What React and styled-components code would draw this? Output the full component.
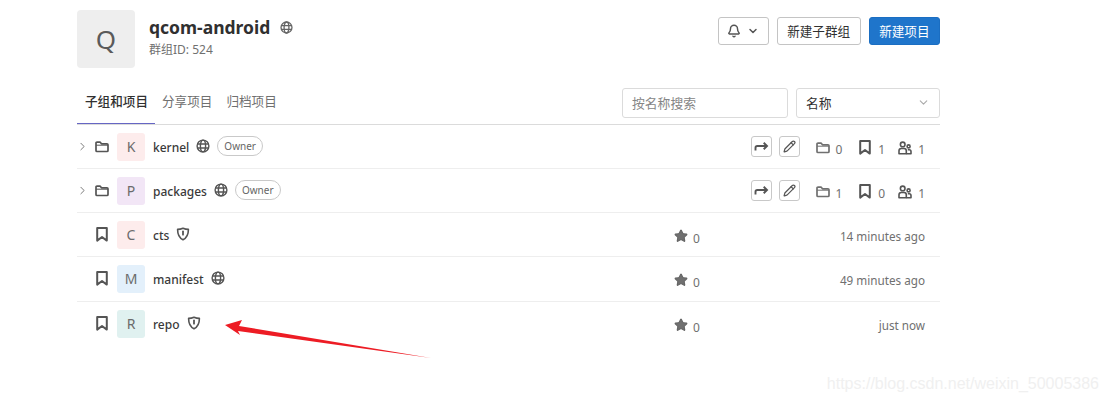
import React from 'react'
import styled, { createGlobalStyle } from 'styled-components'
import { Bell, ChevronDown, ChevronRight, Pencil, Star } from 'lucide-react'

const GlobalStyle = createGlobalStyle`
  html, body { margin: 0; padding: 0; background: #fff; }
  body {
    font-family: "Noto Sans", "Noto Sans CJK SC", sans-serif;
    color: #303030;
    overflow: hidden;
  }
`

const Page = styled.div`
  position: relative;
  width: 1107px;
  height: 401px;
  padding: 10px 167px 0 77px;
  box-sizing: border-box;
`

const GroupHeader = styled.header`
  display: flex;
  align-items: flex-start;
  height: 78px;
`

const GroupAvatar = styled.div`
  width: 58px;
  height: 58px;
  border-radius: 4px;
  background: #eee;
  color: #5a5a5a;
  font-size: 26px;
  display: flex;
  align-items: center;
  justify-content: center;
  margin-right: 14px;
`

const GroupInfo = styled.div`
  flex: 1;
  padding-top: 6px;
`

const GroupTitle = styled.h1`
  margin: 0;
  font-size: 17.5px;
  line-height: 22px;
  font-weight: 700;
  color: #303030;
  display: flex;
  align-items: center;
  gap: 10px;
`

const GroupId = styled.div`
  font-size: 12px;
  line-height: 16px;
  margin-top: 4px;
  color: #707070;
`

const Actions = styled.div`
  display: flex;
  gap: 8px;
  padding-top: 7px;
`

const Button = styled.button`
  height: 28px;
  box-sizing: border-box;
  padding: 0 ${p => (p.$icon ? '0' : '9.5px')} ${p => (p.$icon ? '0' : '2px')};
  width: ${p => (p.$icon ? '51px' : 'auto')};
  border-radius: 3px;
  border: 1px solid ${p => (p.$primary ? '#1b6ec2' : '#c4c4c4')};
  background: ${p => (p.$primary ? '#1f75cb' : '#fff')};
  color: ${p => (p.$primary ? '#fff' : '#303030')};
  font: 400 12.6px "Noto Sans CJK SC", "Noto Sans", sans-serif;
  display: flex;
  align-items: center;
  justify-content: center;
  gap: 6px;
`

const TabsBar = styled.div`
  display: flex;
  align-items: flex-start;
  justify-content: space-between;
  height: 37px;
  box-sizing: border-box;
  border-bottom: 1px solid #dbdbdb;
`

const Tabs = styled.nav`
  display: flex;
`

const Tab = styled.a`
  height: 36px;
  box-sizing: border-box;
  padding: 4px 7px 0 ${p => (p.$active ? '8px' : '7px')};
  width: ${p => (p.$active ? '78px' : 'auto')};
  font: ${p => (p.$active ? 500 : 400)} 12.6px/18px "Noto Sans CJK SC", sans-serif;
  color: ${p => (p.$active ? '#303030' : '#707070')};
  border-bottom: 1px solid ${p => (p.$active ? '#6666c4' : 'transparent')};
`

const Filters = styled.div`
  display: flex;
  gap: 8px;
`

const SearchInput = styled.div`
  width: 166px;
  height: 30px;
  box-sizing: border-box;
  border: 1px solid #dbdbdb;
  border-radius: 3px;
  padding: 0 9px 2px;
  display: flex;
  align-items: center;
  font: 400 12.8px "Noto Sans CJK SC", sans-serif;
  color: #868686;
`

const SortSelect = styled(SearchInput)`
  width: 144px;
  justify-content: space-between;
  color: #303030;
`

const Row = styled.div`
  height: 44.15px;
  box-sizing: border-box;
  border-bottom: ${p => (p.$last ? 'none' : '1px solid #eee')};
  display: flex;
  align-items: center;
  padding: 0 15px 0 0;
`

const Toggle = styled.span`
  width: 18px;
  flex: none;
  display: flex;
  justify-content: center;
  margin-left: -4px;
  margin-right: 4px;
  color: #666;
`

const TypeIcon = styled.span`
  width: 14px;
  flex: none;
  display: flex;
  justify-content: center;
  margin-right: 8px;
  color: #555;
`

const ItemAvatar = styled.div`
  width: 28px;
  height: 28px;
  flex: none;
  border-radius: 3px;
  background: ${p => p.$bg};
  color: #6b6b6b;
  font-size: 14px;
  display: flex;
  align-items: center;
  justify-content: center;
  margin-right: 8px;
`

const ItemName = styled.a`
  font-size: 12px;
  line-height: 16px;
  font-weight: 500;
  color: #3a3a3a;
  margin-top: 2px;
`

const Visibility = styled.span`
  display: flex;
  margin: -2px 0 0 7px;
  color: #555;
`

const TitleVisibility = styled(Visibility)`
  margin: 0;
  color: #666;
`

const OwnerBadge = styled.span`
  height: 20px;
  box-sizing: border-box;
  margin: -1px 0 0 7px;
  padding: 0 6px;
  border: 1px solid #c9c9c9;
  border-radius: 10px;
  font-size: 10px;
  line-height: 18px;
  color: #666;
`

const RowRight = styled.div`
  margin-left: auto;
  display: flex;
  align-items: center;
`

const ProjectMeta = styled(RowRight)`
  width: 251px;
  justify-content: space-between;
  padding-top: 3px;
`

const IconButton = styled.span`
  width: 21px;
  height: 21px;
  box-sizing: border-box;
  margin-right: ${p => p.$gap || 0}px;
  border: 1px solid #c8c8c8;
  border-radius: 3px;
  display: flex;
  align-items: center;
  justify-content: center;
  color: #555;
`

const Stat = styled.span`
  display: flex;
  align-items: center;
  gap: ${p => p.$gap || 5}px;
  margin-left: ${p => p.$left || 0}px;
  margin-top: ${p => (p.$left ? 2 : 0)}px;
  font-size: 12px;
  line-height: 16px;
  color: #707070;
  & > b {
    font-weight: 400;
    padding-top: 5px;
  }
`

const TimeAgo = styled.span`
  font-size: 11.7px;
  color: #707070;
`

const ArrowOverlay = styled.svg`
  position: absolute;
  left: 0;
  top: 0;
  pointer-events: none;
`

const Watermark = styled.div`
  position: absolute;
  right: 8px;
  bottom: 8px;
  font: 400 16px "Liberation Sans", sans-serif;
  color: #f0f0f0;
`

const GlobeIcon = ({ size = 14 }) => (
  <svg width={size} height={size} viewBox="0 0 14 14" fill="none" stroke="currentColor" strokeWidth="1.4">
    <circle cx="7" cy="7" r="5.9" />
    <ellipse cx="7" cy="7" rx="2.6" ry="5.9" />
    <path d="M1.2 5h11.6M1.2 9h11.6" />
  </svg>
)

const ShieldIcon = () => (
  <svg width="14" height="14" viewBox="0 0 14 14" fill="none" stroke="currentColor" strokeWidth="1.6">
    <path d="M7 1.2c2 .9 3.6 1.2 5.4 1.2 0 5-1.6 8.4-5.4 10.3C3.2 10.8 1.6 7.4 1.6 2.4 3.4 2.4 5 2.1 7 1.2z" strokeLinejoin="round" />
    <path d="M7 4.3v3.4" strokeWidth="1.8" strokeLinecap="round" />
  </svg>
)

const FolderIcon = () => (
  <svg width="14" height="12" viewBox="0 0 14 12" fill="none" stroke="currentColor" strokeWidth="1.7">
    <path d="M1 2.2c0-.6.4-1 1-1h3.2l1.3 1.6H12c.6 0 1 .4 1 1v5.7c0 .6-.4 1-1 1H2c-.6 0-1-.4-1-1z" strokeLinejoin="round" />
    <path d="M1 4.2h12" strokeWidth="1" />
  </svg>
)

const BookmarkIcon = () => (
  <svg width="12" height="15" viewBox="0 0 12 15" fill="none" stroke="#555" strokeWidth="2">
    <path d="M1.2 1h9.6v12.6L6 10l-4.8 3.6z" strokeLinejoin="round" />
  </svg>
)

const UsersIcon = () => (
  <svg width="14" height="14" viewBox="0 0 14 14" fill="none" stroke="#555" strokeWidth="1.6">
    <circle cx="4.7" cy="3.4" r="2.3" />
    <path d="M1 12.8V9.8c0-1.3 1-2.3 2.3-2.3h2.8c1.3 0 2.2 1 2.2 2.3v3z" strokeLinejoin="round" />
    <circle cx="10.6" cy="5.4" r="1.5" />
    <path d="M8.3 12.8H13v-2.2c0-1-.8-1.8-1.8-1.8H9.8" strokeLinejoin="round" />
  </svg>
)

const ShareIcon = () => (
  <svg width="15" height="11" viewBox="0 0 15 11" fill="none" stroke="currentColor" strokeWidth="1.9">
    <path d="M1.5 9.5V6.8c0-1 .7-1.8 1.8-1.8h9.2" />
    <path d="M9.7 1.8L13 5 9.7 8.2" />
  </svg>
)

const groups = [
  { name: 'kernel', letter: 'K', bg: '#fdecec', subgroups: 0, projects: 1, members: 1 },
  { name: 'packages', letter: 'P', bg: '#f2e6f6', subgroups: 1, projects: 0, members: 1 },
]

const projects = [
  { name: 'cts', letter: 'C', bg: '#fdecec', shield: true, time: '14 minutes ago' },
  { name: 'manifest', letter: 'M', bg: '#e3f0fb', shield: false, time: '49 minutes ago' },
  { name: 'repo', letter: 'R', bg: '#e0f1f0', shield: true, time: 'just now' },
]

export default function App() {
  return (
    <Page>
      <GlobalStyle />
      <GroupHeader>
        <GroupAvatar>Q</GroupAvatar>
        <GroupInfo>
          <GroupTitle>
            qcom-android
            <TitleVisibility><GlobeIcon size={13} /></TitleVisibility>
          </GroupTitle>
          <GroupId>群组ID: 524</GroupId>
        </GroupInfo>
        <Actions>
          <Button $icon>
            <Bell size={14} strokeWidth={2.5} color="#555" />
            <ChevronDown size={12} strokeWidth={3} color="#555" />
          </Button>
          <Button>新建子群组</Button>
          <Button $primary>新建项目</Button>
        </Actions>
      </GroupHeader>

      <TabsBar>
        <Tabs>
          <Tab $active>子组和项目</Tab>
          <Tab>分享项目</Tab>
          <Tab>归档项目</Tab>
        </Tabs>
        <Filters>
          <SearchInput>按名称搜索</SearchInput>
          <SortSelect>
            名称
            <ChevronDown size={13} color="#aaa" />
          </SortSelect>
        </Filters>
      </TabsBar>

      {groups.map(g => (
        <Row key={g.name}>
          <Toggle><ChevronRight size={13} strokeWidth={1.6} /></Toggle>
          <TypeIcon><FolderIcon /></TypeIcon>
          <ItemAvatar $bg={g.bg}>{g.letter}</ItemAvatar>
          <ItemName>{g.name}</ItemName>
          <Visibility><GlobeIcon /></Visibility>
          <OwnerBadge>Owner</OwnerBadge>
          <RowRight>
            <IconButton $gap={7}><ShareIcon /></IconButton>
            <IconButton><Pencil size={13} strokeWidth={2.2} /></IconButton>
            <Stat $left={16}><FolderIcon /><b>{g.subgroups}</b></Stat>
            <Stat $left={17} $gap={7}><BookmarkIcon /><b>{g.projects}</b></Stat>
            <Stat $left={13} $gap={6}><UsersIcon /><b>{g.members}</b></Stat>
          </RowRight>
        </Row>
      ))}

      {projects.map((p, i) => (
        <Row key={p.name} $last={i === projects.length - 1}>
          <Toggle />
          <TypeIcon><BookmarkIcon /></TypeIcon>
          <ItemAvatar $bg={p.bg}>{p.letter}</ItemAvatar>
          <ItemName>{p.name}</ItemName>
          <Visibility>{p.shield ? <ShieldIcon /> : <GlobeIcon />}</Visibility>
          <ProjectMeta>
            <Stat><Star size={14} fill="currentColor" color="#666" /><b>0</b></Stat>
            <TimeAgo>{p.time}</TimeAgo>
          </ProjectMeta>
        </Row>
      ))}

      <ArrowOverlay width="1107" height="401">
        <polygon points="225,325 242,320 239,326 431,358 238,331 240,335" fill="#ed1c24" />
      </ArrowOverlay>
      <Watermark>https://blog.csdn.net/weixin_50005386</Watermark>
    </Page>
  )
}
